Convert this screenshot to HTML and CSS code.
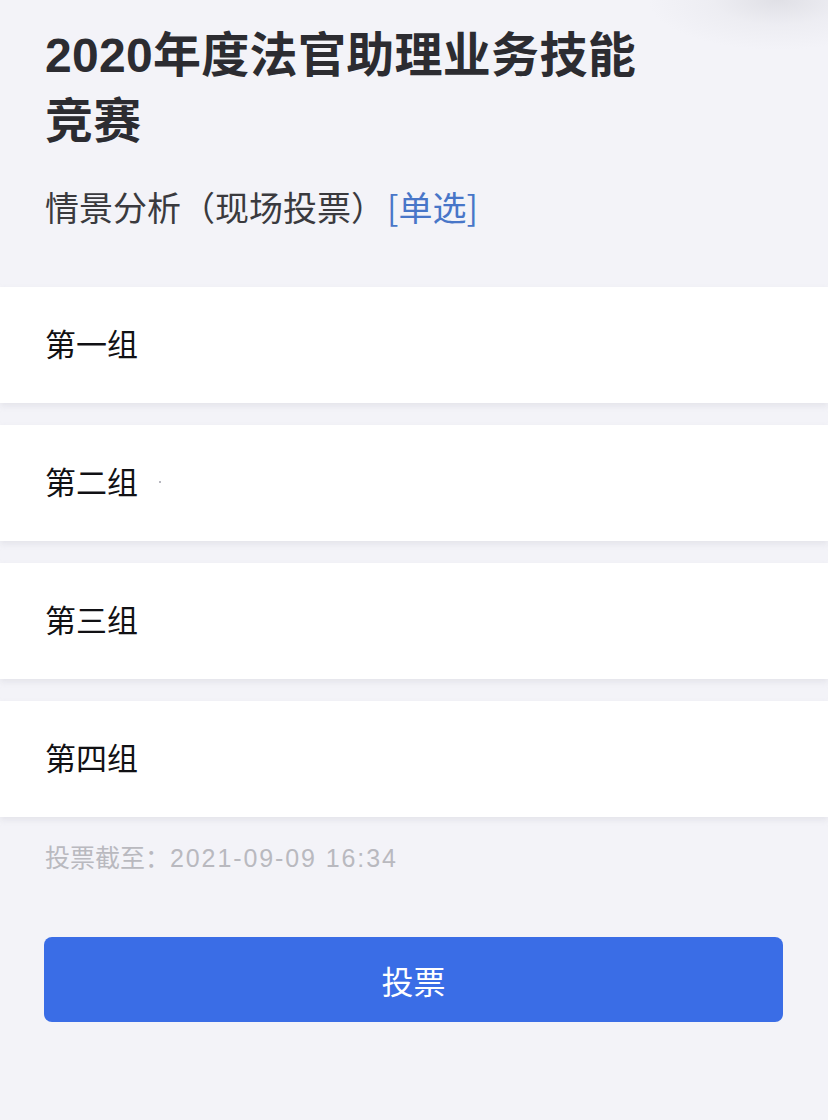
FILE: index.html
```html
<!DOCTYPE html>
<html lang="zh-CN">
<head>
<meta charset="utf-8">
<title>投票</title>
<link rel="stylesheet" href="styles.css">
</head>
<body>
<div class="corner-glow"></div>
<main class="page">
  <header class="head">
    <h1 class="title">2020年度法官助理业务技能<br>竞赛</h1>
    <p class="subtitle">情景分析（现场投票）<span class="tag">[单选]</span></p>
  </header>
  <ul class="options">
    <li class="option">第一组</li>
    <li class="option">第二组<span class="dot"></span></li>
    <li class="option">第三组</li>
    <li class="option">第四组</li>
  </ul>
  <p class="deadline">投票截至：<span class="date">2021-09-09 16:34</span></p>
  <div class="actions">
    <button class="vote-btn" type="button">投票</button>
  </div>
</main>
</body>
</html>
```
FILE: styles.css
```css
* { box-sizing: border-box; }
html, body {
  margin: 0;
  padding: 0;
  background: #f3f3f8;
}
body {
  font-family: "Liberation Sans", "Noto Sans CJK SC", sans-serif;
  width: 828px;
  height: 1120px;
  overflow: hidden;
  position: relative;
}
.corner-glow {
  position: absolute;
  top: 0;
  right: 0;
  width: 200px;
  height: 60px;
  background: radial-gradient(ellipse 130px 50px at 75% 0%, rgba(205,205,212,0.5) 0%, rgba(222,222,228,0.28) 50%, rgba(243,243,248,0) 100%);
}
.page {
  display: flex;
  flex-direction: column;
}
.head {
  padding: 23px 45px 0 45px;
  height: 287px;
}
.title {
  margin: 0;
  font-size: 48px;
  line-height: 66px;
  font-weight: 700;
  color: #2c2c31;
  letter-spacing: 0.3px;
}
.subtitle {
  margin: 30px 0 0 0;
  font-family: "Noto Sans CJK SC", sans-serif;
  font-size: 34px;
  line-height: 44px;
  color: #3a3a3e;
}
.tag {
  color: #4876c8;
  margin-left: 2px;
}
.options {
  list-style: none;
  margin: 0;
  padding: 0;
  display: flex;
  flex-direction: column;
  gap: 22px;
}
.option {
  height: 116px;
  background: #ffffff;
  display: flex;
  align-items: center;
  padding: 0 0 6px 45px;
  font-family: "Noto Sans CJK SC", sans-serif;
  font-size: 31px;
  color: #111114;
  box-shadow: 0 3px 6px rgba(200,200,210,0.35);
}
.dot {
  display: inline-block;
  width: 2px;
  height: 2px;
  background: #b8b8c0;
  margin-left: 21px;
  margin-top: 4px;
}
.deadline {
  margin: 26px 0 0 45px;
  font-size: 25px;
  line-height: 30px;
  color: #b9b9bf;
}
.date {
  letter-spacing: 1.9px;
}
.actions {
  padding: 64px 45px 0 44px;
}
.vote-btn {
  display: block;
  width: 739px;
  height: 85px;
  border: none;
  border-radius: 8px;
  background: #3a6de6;
  color: #ffffff;
  font-family: "Noto Sans CJK SC", sans-serif;
  font-size: 32px;
  padding: 0;
}
```
